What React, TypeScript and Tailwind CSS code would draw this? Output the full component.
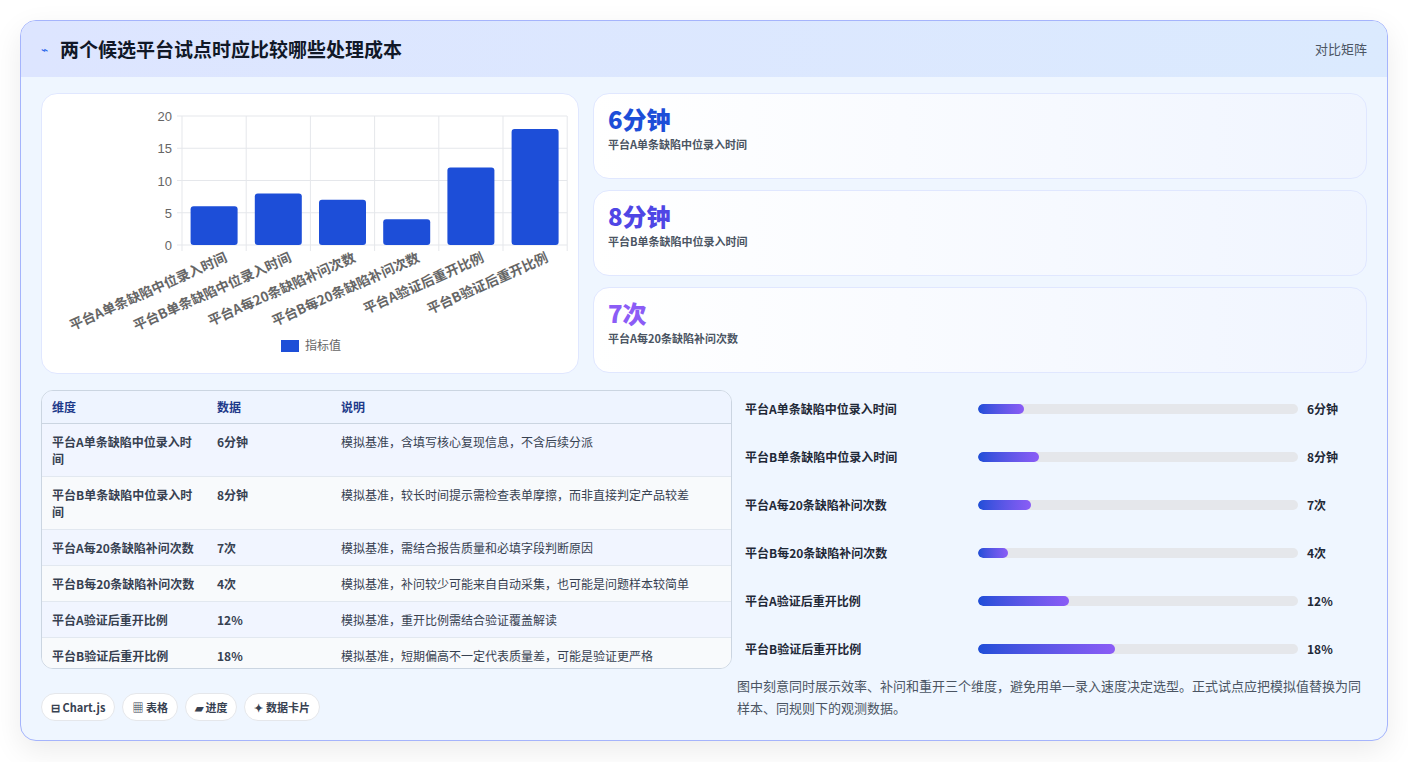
const font = { fontFamily: '"Noto Sans CJK SC", "Noto Sans", sans-serif' };

const metrics = [
  { label: "平台A单条缺陷中位录入时间", value: 6, text: "6分钟", note: "模拟基准，含填写核心复现信息，不含后续分派" },
  { label: "平台B单条缺陷中位录入时间", value: 8, text: "8分钟", note: "模拟基准，较长时间提示需检查表单摩擦，而非直接判定产品较差" },
  { label: "平台A每20条缺陷补问次数", value: 7, text: "7次", note: "模拟基准，需结合报告质量和必填字段判断原因" },
  { label: "平台B每20条缺陷补问次数", value: 4, text: "4次", note: "模拟基准，补问较少可能来自自动采集，也可能是问题样本较简单" },
  { label: "平台A验证后重开比例", value: 12, text: "12%", note: "模拟基准，重开比例需结合验证覆盖解读" },
  { label: "平台B验证后重开比例", value: 18, text: "18%", note: "模拟基准，短期偏高不一定代表质量差，可能是验证更严格" },
];

function Chart() {
  const x0 = 140, y0 = 151, unit = 6.45, cw = 64.2;
  return (
    <svg width="538" height="280" viewBox="0 0 538 280" className="block">
      {[0, 5, 10, 15, 20].map((t) => (
        <g key={t}>
          <line x1={x0 - 5} x2={525} y1={y0 - t * unit} y2={y0 - t * unit} stroke="#e5e7eb" />
          <text x={x0 - 10} y={y0 - t * unit + 5} textAnchor="end" fontSize="13" fill="#666" fontFamily="Liberation Sans, sans-serif">{t}</text>
        </g>
      ))}
      {[0, 1, 2, 3, 4, 5, 6].map((i) => (
        <line key={i} x1={x0 + i * cw} x2={x0 + i * cw} y1={y0 - 20 * unit} y2={y0 + 6} stroke="#e5e7eb" />
      ))}
      {metrics.map((m, i) => {
        const cx = x0 + i * cw + cw / 2;
        return (
          <g key={m.label}>
            <rect x={cx - 23.5} y={y0 - m.value * unit} width="47" height={m.value * unit} rx="3" fill="#1d4ed8" />
            <text x={cx + 14} y={y0 + 16} textAnchor="end" fontSize="13.5" fontWeight="600" fill="#666" transform={`rotate(-24 ${cx + 14} ${y0 + 16})`} style={font}>{m.label}</text>
          </g>
        );
      })}
      <rect x="239" y="246" width="18" height="12" fill="#1d4ed8" />
      <text x="263" y="256" fontSize="12" fill="#666" style={font}>指标值</text>
    </svg>
  );
}

export default function App() {
  return (
    <div className="min-h-screen bg-white p-5" style={font}>
      <div className="w-[1368px] h-[721px] rounded-2xl border border-[#a5b4fc] bg-[#eff6ff] overflow-hidden shadow-[0_10px_30px_rgba(0,0,0,0.08)] flex flex-col">
        <div className="h-[56px] flex items-center justify-between px-5 bg-gradient-to-r from-[#dde5ff] to-[#dbeafe]">
          <div className="flex items-center gap-3">
            <span className="text-[#2563eb] text-xs">⌁</span>
            <h1 className="text-[19px] font-bold text-[#111827]">两个候选平台试点时应比较哪些处理成本</h1>
          </div>
          <span className="text-[13px] text-[#4b5563]">对比矩阵</span>
        </div>
        <div className="flex-1 px-5 pt-4 flex flex-col">
          <div className="flex gap-[14px]">
            <div className="w-[538px] h-[281px] bg-white rounded-2xl border border-[#e0e7ff]">
              <Chart />
            </div>
            <div className="flex-1 flex flex-col gap-[11px]">
              {[
                { v: "6分钟", c: "text-[#1d4ed8]", l: "平台A单条缺陷中位录入时间" },
                { v: "8分钟", c: "text-[#4f46e5]", l: "平台B单条缺陷中位录入时间" },
                { v: "7次", c: "text-[#8b5cf6]", l: "平台A每20条缺陷补问次数" },
              ].map((s) => (
                <div key={s.v} className="h-[86px] rounded-2xl border border-[#e0e7ff] bg-gradient-to-r from-white to-[#f0f5ff] px-[14px] pt-[10px]">
                  <div className={`text-[24px] font-extrabold leading-[30px] ${s.c}`}>{s.v}</div>
                  <div className="text-[11px] font-semibold text-[#4b5563] mt-[2px]">{s.l}</div>
                </div>
              ))}
            </div>
          </div>
          <div className="flex gap-[13px] mt-4">
            <div className="w-[691px] h-[279px] rounded-xl border border-[#cbd5e1] overflow-hidden bg-[#f8fafc] text-[12px]">
              <div className="flex h-[33px] items-center bg-[#eef4ff] text-[#1e3a8a] font-semibold border-b border-[#cbd5e1]">
                <div className="w-[175px] pl-[10px]">维度</div>
                <div className="w-[124px]">数据</div>
                <div className="flex-1">说明</div>
              </div>
              {metrics.map((m, i) => (
                <div key={m.label} className={`flex py-[9px] ${i < 5 ? "border-b border-[#e2e8f0]" : ""} ${i % 2 === 0 ? "bg-[#f1f5ff]" : "bg-[#f8fafc]"} text-[#374151] leading-[17px]`}>
                  <div className="w-[175px] pl-[10px] pr-[19px] font-semibold">{m.label}</div>
                  <div className="w-[124px] font-semibold">{m.text}</div>
                  <div className="flex-1 pr-2">{m.note}</div>
                </div>
              ))}
            </div>
            <div className="flex-1 flex flex-col gap-[30px] pt-[10px]">
              {metrics.map((m) => (
                <div key={m.label} className="flex items-center h-[18px] text-[12px] font-semibold text-[#1f2937]">
                  <div className="w-[233px]">{m.label}</div>
                  <div className="w-[320px] h-[10px] rounded-full bg-[#e5e7eb] overflow-hidden">
                    <div className="h-full rounded-full bg-gradient-to-r from-[#1d4ed8] to-[#8b5cf6]" style={{ width: `${(m.value / 42) * 100}%` }} />
                  </div>
                  <div className="ml-[9px]">{m.text}</div>
                </div>
              ))}
            </div>
          </div>
          <div className="flex justify-between mt-[6px]">
            <div className="flex gap-[7px] items-center pt-[18px]">
              {["⊟ Chart.js", "▦ 表格", "▰ 进度", "✦ 数据卡片"].map((p) => (
                <span key={p} className="h-[28px] px-[9px] flex items-center rounded-full bg-white border border-[#e5e7eb] text-[11px] font-semibold text-[#374151]">{p}</span>
              ))}
            </div>
            <p className="w-[630px] text-[13px] leading-[22px] text-[#4b5563]">图中刻意同时展示效率、补问和重开三个维度，避免用单一录入速度决定选型。正式试点应把模拟值替换为同样本、同规则下的观测数据。</p>
          </div>
        </div>
      </div>
    </div>
  );
}
